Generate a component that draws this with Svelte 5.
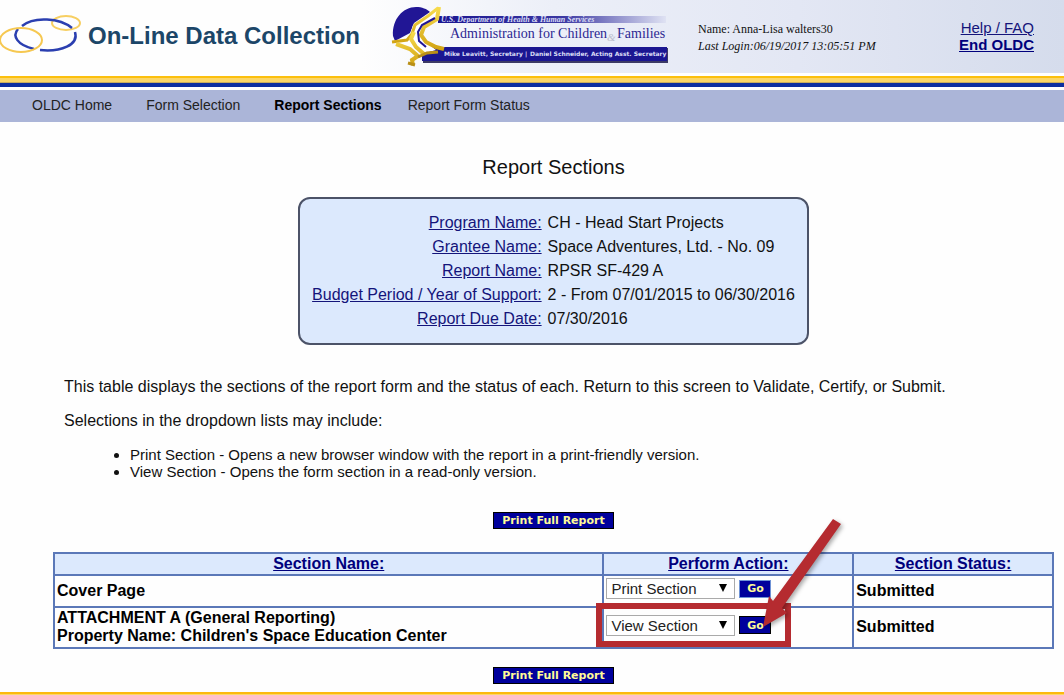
<script>
	const navItems = ['OLDC Home', 'Form Selection', 'Report Sections', 'Report Form Status'];
	let current = $state('Report Sections');

	const details = [
		['Program Name:', 'CH - Head Start Projects'],
		['Grantee Name:', 'Space Adventures, Ltd. - No. 09'],
		['Report Name:', 'RPSR SF-429 A'],
		['Budget Period / Year of Support:', '2 - From 07/01/2015 to 06/30/2016'],
		['Report Due Date:', '07/30/2016']
	];

	let sections = $state([
		{ lines: ['Cover Page'], action: 'Print Section', status: 'Submitted', marked: false },
		{
			lines: ['ATTACHMENT A (General Reporting)', "Property Name: Children's Space Education Center"],
			action: 'View Section',
			status: 'Submitted',
			marked: true
		}
	]);
</script>

<div class="page">
	<header>
		<div class="brand">
			<svg class="rings" width="82" height="42" viewBox="0 0 82 42" fill="none" aria-hidden="true">
				<ellipse cx="66" cy="9" rx="14" ry="7" stroke="#f7cf62" stroke-width="2" />
				<path d="M22 12C34 2 60 4 72 14M75 18C79 31 61 38 40 36M34 35C17 31 12 22 18 15" stroke="#2b3fb0" stroke-width="2.5" />
				<ellipse cx="21" cy="26" rx="21" ry="12" stroke="#f6c851" stroke-width="2" />
			</svg>
			<span class="brand-name">On-Line Data Collection</span>
		</div>
		<svg class="acf" width="280" height="64" viewBox="0 0 280 64" role="img" aria-label="Administration for Children and Families">
			<defs>
				<linearGradient id="fade">
					<stop offset="0" stop-color="#1b1691" />
					<stop offset="0.55" stop-color="#3b38a2" />
					<stop offset="1" stop-color="#dfe2f3" />
				</linearGradient>
				<linearGradient id="gold" x2="0" y2="1">
					<stop offset="0" stop-color="#f8dc4e" />
					<stop offset="1" stop-color="#d2a414" />
				</linearGradient>
			</defs>
			<rect x="48" y="11" width="228" height="7" fill="url(#fade)" />
			<rect x="33" y="43" width="245" height="15" fill="#3c3a65" />
			<rect x="32" y="42" width="245" height="14" fill="#1b1691" />
			<path d="M3 31C2 14 13 2 26 2C32 2 37 4 40 7L24 18L20 28L5 36Z" fill="#211695" />
			<path d="M5 37L20 30L23 20L38 9L49 3L46 15L34 23L32 31L40 40L46 45L32 49L20 42Z" fill="#fff" />
			<path d="M2 37L17 35L22 29L25 20L38 11L48 3" fill="none" stroke="url(#gold)" stroke-width="3" />
			<path d="M49 2L47 14L34 22L31 30L36 37L46 42L54 44" fill="none" stroke="url(#gold)" stroke-width="4" />
			<path d="M45 13L32 20L28 27L29 36L36 42" fill="none" stroke="#211695" stroke-width="2" />
			<path d="M24 27L21 34L26 42L34 49M6 39L20 44L28 51L22 55L23 60" fill="none" stroke="url(#gold)" stroke-width="4" />
			<path d="M18 58L25 60M28 52L37 48L48 47" fill="none" stroke="#b98f18" stroke-width="3" />
			<text x="51" y="17" class="dept">U.S. Department of Health &amp; Human Services</text>
			<text x="217" y="36" class="amp">&amp;</text>
			<text x="60" y="33" class="admin">Administration for Children</text>
			<text x="227" y="33" class="admin">Families</text>
			<text x="54" y="51" class="names">Mike Leavitt, Secretary</text>
			<text x="135" y="51" class="names">|</text>
			<text x="140" y="51" class="names">Daniel Schneider, Acting Asst. Secretary</text>
		</svg>
		<div class="user">
			<div>Name: Anna-Lisa walters30</div>
			<div><i>Last Login:06/19/2017 13:05:51 PM</i></div>
		</div>
		<div class="help">
			<a href="#help">Help / FAQ</a>
			<a href="#end" class="end">End OLDC</a>
		</div>
	</header>
	<div class="stripes"></div>
	<nav>
		{#each navItems as item}
			<a href="#nav" class:current={item === current} onclick={() => (current = item)}>{item}</a>
		{/each}
	</nav>

	<main>
		<h1>Report Sections</h1>

		<dl class="details">
			{#each details as [label, value]}
				<dt><a href="#detail">{label}</a></dt>
				<dd>{value}</dd>
			{/each}
		</dl>

		<div class="intro">
			<p>This table displays the sections of the report form and the status of each. Return to this screen to Validate, Certify, or Submit.</p>
			<p>Selections in the dropdown lists may include:</p>
			<ul>
				<li>Print Section - Opens a new browser window with the report in a print-friendly version.</li>
				<li>View Section - Opens the form section in a read-only version.</li>
			</ul>
		</div>

		<button class="print">Print Full Report</button>

		<table>
			<thead>
				<tr>
					<th class="name"><a href="#name">Section Name:</a></th>
					<th class="action"><a href="#action">Perform Action:</a></th>
					<th><a href="#status">Section Status:</a></th>
				</tr>
			</thead>
			<tbody>
				{#each sections as section}
					<tr>
						<td>
							{#each section.lines as line}
								<div>{line}</div>
							{/each}
						</td>
						<td>
							<div class="controls">
								<span class="picker">
									<select aria-label="Action for {section.lines[0]}" bind:value={section.action}>
										<option>Print Section</option>
										<option>View Section</option>
									</select>
									<svg class="caret" width="8" height="8" viewBox="0 0 8 8" aria-hidden="true"><path d="M0 0H8L4 8Z" /></svg>
								</span>
								<button class="go" class:lit={!section.marked}>Go</button>
								{#if section.marked}
									<span class="frame"></span>
									<svg class="arrow" width="86" height="116" viewBox="0 0 86 116" aria-hidden="true">
										<path d="M3 111L9 80L13 85L73 3L81 8L22 92L27 97Z" fill="#b52b30" />
									</svg>
								{/if}
							</div>
						</td>
						<td>{section.status}</td>
					</tr>
				{/each}
			</tbody>
		</table>

		<button class="print">Print Full Report</button>
	</main>
	<footer></footer>
</div>

<style>
	:global(body) {
		margin: 0;
		background: #fefefe;
	}

	.page {
		min-height: 100vh;
		display: flex;
		flex-direction: column;
		font-family: Arial, "Liberation Sans", sans-serif;
		font-size: 16px;
		line-height: 18px;
		color: #111;
	}

	a {
		color: #14147a;
	}

	header {
		display: flex;
		align-items: flex-start;
		height: 73px;
		background: linear-gradient(90deg, #fefefe 34%, #eceff8 52%, #e3e7f4 75%, #d5dcec);
	}

	.brand {
		display: flex;
		flex: 0 0 388px;
		padding-top: 14px;
	}

	.brand-name {
		padding: 8px 0 0 6px;
		font-size: 24px;
		line-height: 28px;
		font-weight: bold;
		color: #1c4668;
		white-space: nowrap;
	}

	.acf {
		flex: none;
		margin: 5px 0 0 2px;
	}

	.dept {
		font: italic bold 8px "Liberation Serif", serif;
		fill: #d9dcf5;
	}

	.admin {
		font: 14px "Liberation Serif", serif;
		fill: #2d2892;
	}

	.amp {
		font: italic 11px "Liberation Serif", serif;
		fill: #b9bccb;
	}

	.names {
		font: bold 6px "DejaVu Sans", sans-serif;
		fill: #dcdef6;
	}

	.user {
		padding: 21px 0 0 28px;
		font-family: Georgia, "Liberation Serif", serif;
		font-size: 12px;
		line-height: 17px;
		white-space: nowrap;
	}

	.help {
		display: flex;
		flex-direction: column;
		align-items: flex-end;
		margin-left: auto;
		padding: 19px 30px 0 0;
		font-size: 15px;
		line-height: 17px;
		white-space: nowrap;
	}

	.end {
		font-weight: bold;
		color: #00007c;
	}

	.stripes {
		height: 17px;
		background: linear-gradient(#fff 3px, #fcc00d 3px 5px, #fbd668 5px 9px, #c8ad5c 9px 10px, #0c2ea0 10px 14px, #fff 14px);
	}

	nav {
		display: flex;
		gap: 26px;
		padding: 6px 32px 8px;
		background: #abb5d8;
		font-size: 14px;
	}

	nav a {
		padding-right: 8px;
		color: #222;
		text-decoration: none;
	}

	nav .current {
		padding-right: 0;
		font-weight: bold;
		color: #000;
	}

	main {
		display: flex;
		flex-direction: column;
		align-items: center;
		flex: 1;
		padding: 33px 10px 8px 53px;
	}

	h1 {
		margin: 0;
		font-size: 20px;
		line-height: 24px;
		font-weight: normal;
	}

	.details {
		display: grid;
		grid-template-columns: auto auto;
		column-gap: 6px;
		margin: 18px 0 0;
		padding: 12px;
		border: 2px solid #4c5368;
		border-radius: 12px;
		background: #dce9fd;
		line-height: 24px;
	}

	dt {
		text-align: right;
	}

	dd {
		margin: 0;
	}

	.intro {
		align-self: stretch;
		padding: 33px 11px 0;
	}

	.intro p {
		margin: 0 0 16px;
	}

	ul {
		margin: 0 0 32px;
		padding-left: 66px;
		font-size: 15px;
		line-height: 17px;
	}

	button {
		padding: 0;
		border: 1px solid #000;
		background: #00009c;
		color: #fffb98;
		font: bold 11px/15px Verdana, "DejaVu Sans", sans-serif;
	}

	.print {
		width: 121px;
		height: 17px;
		white-space: nowrap;
	}

	table {
		width: 100%;
		margin: 23px 0 18px;
		border-collapse: collapse;
		table-layout: fixed;
		font-weight: bold;
		color: #000;
	}

	th,
	td {
		box-sizing: border-box;
		border: 2px solid #5b78b8;
		padding: 1px 2px 2px;
		text-align: left;
	}

	th {
		padding: 1px 2px;
		background: #dce9fd;
		text-align: center;
	}

	th a {
		color: #00007c;
	}

	.name {
		width: 55%;
	}

	.action {
		width: 25%;
	}

	.controls {
		position: relative;
		display: flex;
		align-items: center;
		gap: 4px;
		padding: 1px 0 5px;
	}

	.picker {
		position: relative;
		display: flex;
	}

	select {
		width: 129px;
		height: 21px;
		padding: 0 4px;
		border: 1px solid #aaa;
		border-radius: 0;
		appearance: none;
		background: #fff;
		color: #222;
		font: 15px Arial, "Liberation Sans", sans-serif;
	}

	.caret {
		position: absolute;
		top: 6px;
		right: 8px;
		pointer-events: none;
	}

	.go {
		width: 32px;
		height: 18px;
	}

	.lit {
		border-color: #6f93d6;
	}

	.frame {
		position: absolute;
		top: -11px;
		left: -10px;
		width: 183px;
		height: 32px;
		border: 6px solid #b52b30;
		pointer-events: none;
	}

	.arrow {
		position: absolute;
		top: -98px;
		left: 154px;
		pointer-events: none;
		filter: drop-shadow(2px 2px 2px #0005);
	}

	footer {
		height: 3px;
		background: linear-gradient(#fcb90d 2px, #fbd668 2px);
	}
</style>
